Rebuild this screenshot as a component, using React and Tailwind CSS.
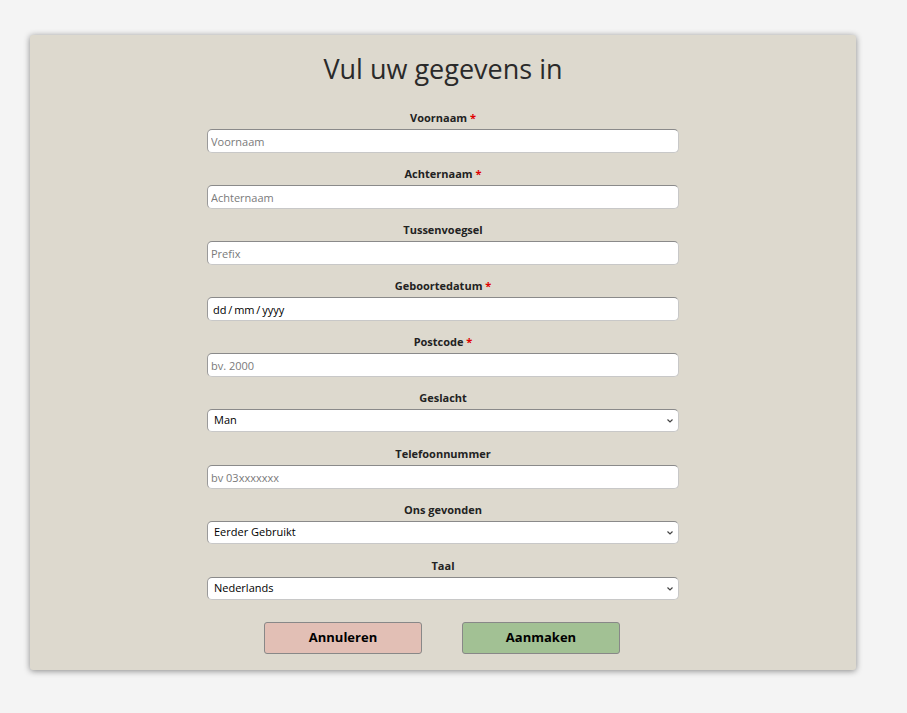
import React, { useState } from 'react';

const Label = ({ text, required }) => (
  <label className="block text-center text-[11px] font-bold text-[#222] leading-[16px] mb-[3px]">
    {text}
    {required && <span className="text-[#e00000]"> *</span>}
  </label>
);

const TextField = ({ label, required, placeholder, value }) => (
  <div className="mb-[13px]">
    <Label text={label} required={required} />
    <input
      type="text"
      placeholder={placeholder}
      defaultValue={value}
      className={`block w-full h-[24px] ${value ? 'pl-[5px]' : 'pl-[3px]'} bg-white rounded-[5px] border border-[#c8c8c8] border-t-[#8a8a8a] border-l-[#9a9a9a] text-[11px] text-black placeholder:text-[#7a7a7a] focus:outline-none`}
    />
  </div>
);

const SelectField = ({ label, options, value, onChange }) => (
  <div className="mb-[14px]">
    <Label text={label} />
    <div className="relative">
      <select
        value={value}
        onChange={(e) => onChange(e.target.value)}
        className="block w-full h-[23px] pl-[6px] pr-6 appearance-none bg-white rounded-[5px] border border-[#c8c8c8] border-t-[#8a8a8a] border-l-[#9a9a9a] text-[11px] text-black focus:outline-none"
      >
        {options.map((o) => (
          <option key={o}>{o}</option>
        ))}
      </select>
      <svg className="absolute right-[5px] top-[9px] pointer-events-none" width="8" height="6" viewBox="0 0 8 6">
        <path d="M1.5 1.5 L4 4 L6.5 1.5" fill="none" stroke="#444" strokeWidth="1.2" />
      </svg>
    </div>
  </div>
);

const App = () => {
  const [gender, setGender] = useState('Man');
  const [found, setFound] = useState('Eerder Gebruikt');
  const [lang, setLang] = useState('Nederlands');

  return (
    <div className="min-h-screen bg-[#f4f4f4] pt-[35px]" style={{ fontFamily: '"Open Sans", "Noto Sans", sans-serif' }}>
      <div className="ml-[30px] w-[826px] h-[635px] bg-[#ddd9ce] rounded-[3px] shadow-[0_1px_6px_rgba(0,0,0,0.45)] pt-[14px]">
        <h1 className="text-center text-[27px] leading-[40px] text-[#2a2a2a] font-normal">Vul uw gegevens in</h1>
        <div className="w-[472px] mx-auto mt-[21px]">
          <TextField label="Voornaam" required placeholder="Voornaam" />
          <TextField label="Achternaam" required placeholder="Achternaam" />
          <TextField label="Tussenvoegsel" placeholder="Prefix" />
          <TextField label="Geboortedatum" required value={'dd\u2009/\u2009mm\u2009/\u2009yyyy'} />
          <TextField label="Postcode" required placeholder="bv. 2000" />
          <SelectField label="Geslacht" options={['Man', 'Vrouw', 'Anders']} value={gender} onChange={setGender} />
          <TextField label="Telefoonnummer" placeholder="bv 03xxxxxxx" />
          <SelectField label="Ons gevonden" options={['Eerder Gebruikt', 'Google', 'Vrienden']} value={found} onChange={setFound} />
          <SelectField label="Taal" options={['Nederlands', 'Frans', 'Engels']} value={lang} onChange={setLang} />
        </div>
        <div className="flex justify-center gap-[40px] mt-[22px] pr-[2px]">
          <button className="w-[158px] h-[32px] bg-[#e2bfb5] border border-[#888] rounded-[3px] text-[13px] font-bold text-black">
            Annuleren
          </button>
          <button className="w-[158px] h-[32px] bg-[#a2c194] border border-[#888] rounded-[3px] text-[13px] font-bold text-black">
            Aanmaken
          </button>
        </div>
      </div>
    </div>
  );
};

export default App;
